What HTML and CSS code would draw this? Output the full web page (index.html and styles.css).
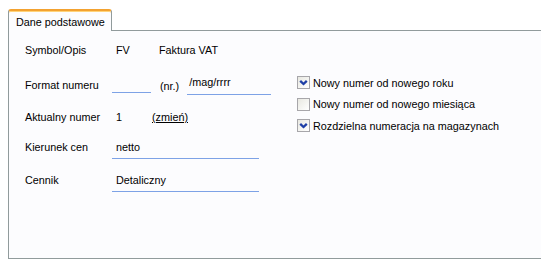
FILE: index.html
```html
<!DOCTYPE html>
<html lang="pl">
<head>
    <meta charset="UTF-8">
    <title>Dane podstawowe</title>
    <link rel="stylesheet" href="styles.css">
</head>
<body>
    <div class="tabs">
        <div class="tab">Dane podstawowe</div>

        <div class="panel">
            <!-- lewa kolumna: pola formularza -->
            <div class="form">
                <span class="label">Symbol/Opis</span>
                <div class="value">
                    <span class="code">FV</span>
                    <span>Faktura VAT</span>
                </div>

                <span class="label">Format numeru</span>
                <div class="value">
                    <span class="field field-short"></span>
                    <span class="nr">(nr.)</span>
                    <span class="field field-suffix">/mag/rrrr</span>
                </div>

                <span class="label">Aktualny numer</span>
                <div class="value">
                    <span class="number">1</span>
                    <a class="change">(zmień)</a>
                </div>

                <span class="label">Kierunek cen</span>
                <div class="value">
                    <span class="field field-wide">netto</span>
                </div>

                <span class="label">Cennik</span>
                <div class="value">
                    <span class="field field-wide">Detaliczny</span>
                </div>
            </div>

            <!-- prawa kolumna: opcje numeracji -->
            <ul class="options">
                <li>
                    <span class="check checked">
                        <svg width="11" height="11" viewBox="0 0 11 11"><polyline points="2.2,3.8 5.5,7 8.8,3.8" fill="none" stroke="#1f3fa6" stroke-width="2.3"/></svg>
                    </span>
                    Nowy numer od nowego roku
                </li>
                <li>
                    <span class="check"></span>
                    Nowy numer od nowego miesiąca
                </li>
                <li>
                    <span class="check checked">
                        <svg width="11" height="11" viewBox="0 0 11 11"><polyline points="2.2,3.8 5.5,7 8.8,3.8" fill="none" stroke="#1f3fa6" stroke-width="2.3"/></svg>
                    </span>
                    Rozdzielna numeracja na magazynach
                </li>
            </ul>
        </div>
    </div>
</body>
</html>
```

FILE: styles.css
```css
html, body {
    overflow: hidden;
}

body {
    margin: 0;
    padding: 9px 0 0 8px;
    background: #ffffff;
    font-family: "Liberation Sans", Arial, sans-serif;
    font-size: 10.8px;
    color: #000;
}

.tabs {
    width: 545px;
}

.tab {
    position: relative;
    z-index: 1;
    display: inline-block;
    box-sizing: border-box;
    width: 104px;
    height: 22px;
    padding: 5px 0 0 7px;
    margin-bottom: -1px;
    background: #fcfcfe;
    border: 1px solid #919b9c;
    border-bottom: none;
    border-top: 2px solid #f3a230;
    border-radius: 3px 3px 0 0;
    box-shadow: inset 0 1px 0 #ffd37a;
}

.panel {
    display: flex;
    box-sizing: border-box;
    height: 229px;
    padding: 3px 0 0 16px;
    background: #fcfcfe;
    border: 1px solid #919b9c;
    box-shadow: 0 1px 0 #d5d5c7, 0 2px 0 #e6e6da;
}

.form {
    display: grid;
    grid-template-columns: 87px 160px;
    grid-template-rows: 32px 38px 26px 34px 32px;
    align-items: center;
}

.value {
    display: flex;
    align-items: center;
}

.code {
    width: 43px;
    margin-left: 4px;
}

.number {
    width: 36px;
    margin-left: 4px;
}

.change {
    text-decoration: underline;
}

.field {
    box-sizing: border-box;
    height: 16px;
    padding-left: 4px;
    border-bottom: 1px solid #7da2e6;
}

.field-short {
    width: 39px;
}

.nr {
    margin: 2px 8px 0 9px;
}

.field-suffix {
    width: 84px;
    height: 18px;
    padding-left: 2px;
    margin-top: 1px;
    line-height: 11px;
}

.field-wide {
    width: 147px;
    height: 18px;
    margin-top: 6px;
}

.options {
    list-style: none;
    margin: 38px 0 0 25px;
    padding: 0;
}

.options li {
    display: flex;
    align-items: center;
    height: 21.5px;
    gap: 3px;
}

.check {
    display: flex;
    align-items: center;
    justify-content: center;
    box-sizing: border-box;
    width: 13px;
    height: 13px;
    background: linear-gradient(135deg, #e8e8e1, #ffffff);
    border: 1px solid #a7a6aa;
}
```
